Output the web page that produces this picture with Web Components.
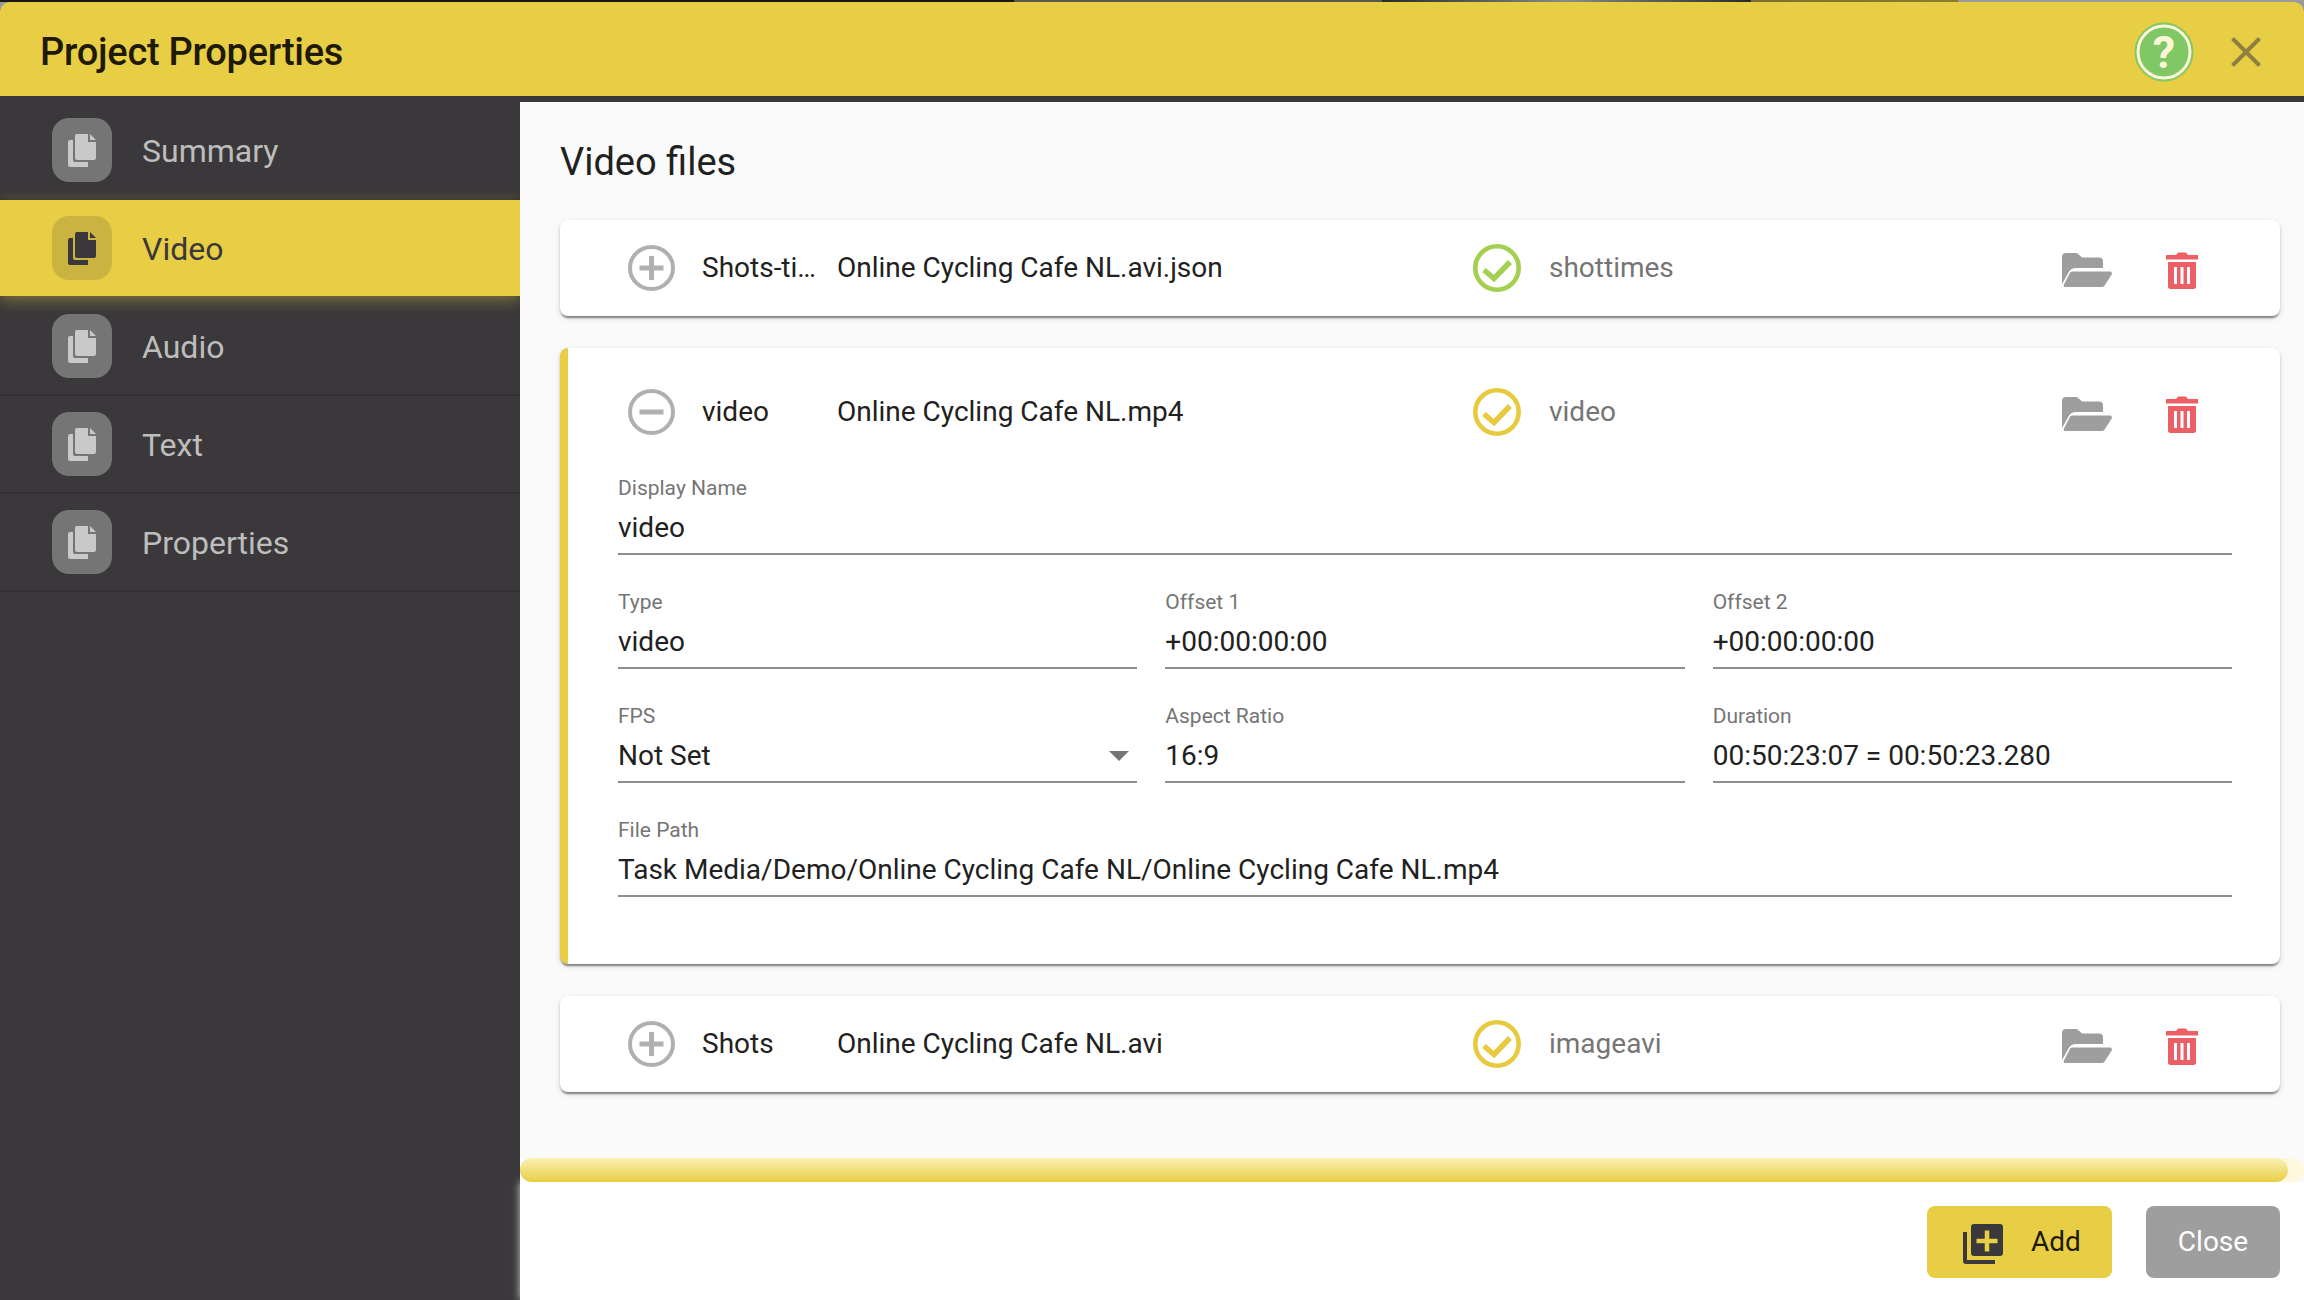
<!DOCTYPE html>
<html><head><meta charset="utf-8">
<style>
html,body{margin:0;padding:0;width:2304px;height:1300px;overflow:hidden;background:#9a9a9a;font-family:Roboto,"Liberation Sans",sans-serif}
</style></head><body>
<pp-app></pp-app>
<script>
const sel=(name,html)=>{customElements.define(name,class extends HTMLElement{connectedCallback(){if(this.shadowRoot)return;this.attachShadow({mode:'open'}).innerHTML=typeof html==='function'?html(this):html;}})};

const docIcon=`<svg width="28" height="33" viewBox="0 0 28 33" fill="currentColor"><path d="M0 8a2 2 0 0 1 2-2h3v20a2 2 0 0 0 2 2h13v5H2a2 2 0 0 1-2-2z"/><path d="M9 0h11v8h8v16a2 2 0 0 1-2 2H9a2 2 0 0 1-2-2V2a2 2 0 0 1 2-2z"/><path d="M22 0l6 6h-6z"/></svg>`;

sel('pp-nav-item',h=>`<style>
:host{display:flex;align-items:center;box-sizing:border-box;height:98px;padding-left:52px;border-bottom:2px solid #333133;color:#bdbdbd;font-size:32px;position:relative}
:host([active]){background:#e8ce45;color:#3a383a;border-bottom:0;height:96px;margin-bottom:2px;box-shadow:0 4px 14px rgba(232,206,69,.4);z-index:1}
.ic{width:60px;height:64px;border-radius:17px;background:#757575;color:#c9c9c9;display:flex;align-items:center;justify-content:center;margin-right:30px}
:host([active]) .ic{background:#cbb342;color:#3a383a}
.t{position:relative;top:1px}
</style><span class="ic">${docIcon}</span><span class="t"><slot></slot></span>`);

sel('pp-sidebar',`<style>:host{display:block;width:520px;flex:none;background:#3a383a;padding-top:6px;box-sizing:border-box;position:relative;z-index:0}</style><slot></slot>`);

sel('pp-header',`<style>
:host{display:flex;align-items:center;height:94px;flex:none;background:#e8ce45;border-radius:10px 10px 0 0;padding:0 43px 0 40px;color:#1f1a05;font-size:38px;font-weight:500;letter-spacing:-.25px;box-sizing:border-box}
.t{flex:1;position:relative;top:3px}
svg{display:block}
.help{margin-right:37px;position:relative;width:60px;height:60px;top:3px}
.q{position:absolute;inset:0;display:flex;align-items:center;justify-content:center;color:#fbf6d6;font:700 45px Roboto,sans-serif;letter-spacing:0}
</style>
<span class="t"><slot></slot></span>
<span class="help"><svg width="60" height="60" viewBox="0 0 60 60"><circle cx="30" cy="30" r="29.500" fill="#80c765"/><circle cx="30" cy="30" r="26" fill="none" stroke="#fbf6d6" stroke-width="3"/></svg><span class="q">?</span></span>
<svg width="30" height="30" viewBox="0 0 30 30" style="position:relative;top:3px"><path d="M1.500 1.500l27 27M28.500 1.500l-27 27" stroke="#8f8041" stroke-width="4" fill="none"/></svg>`);

const folder=`<svg width="50" height="34" viewBox="0 0 50 34" fill="#9e9e9e"><path d="M0 4a4 4 0 0 1 4-4h10a3 3 0 0 1 2 .8l4 3.700h17a4 4 0 0 1 4 4V15H14c-3.500 0-6 1.500-7.500 4.500L0 31z"/><path d="M10 18.500h38a2 2 0 0 1 1.800 2.800L43 32a4 4 0 0 1-3 2H3a1.500 1.500 0 0 1-1.200-2.200l6-11.500a3 3 0 0 1 2.200-1.800z"/></svg>`;
const trash=`<svg width="32" height="37" viewBox="0 0 32 37" fill="#ec5f67"><path d="M0 3h10l2-2.500h8l2 2.500h10v4.500H0z"/><path fill-rule="evenodd" d="M2 10h28v24.500a2.500 2.500 0 0 1-2.500 2.500h-23A2.500 2.500 0 0 1 2 34.500zM8 15v17h3V15zM14.500 15v17h3V15zM21 15v17h3V15z"/></svg>`;
const exp=(open)=>`<svg width="47" height="46" viewBox="0 0 47 46"><ellipse cx="23.500" cy="23" rx="21.500" ry="21" fill="none" stroke="#b0b0b0" stroke-width="4"/><path d="${open?'M11.500 23h24':'M11.500 23h24M23.500 11v24'}" stroke="#b0b0b0" stroke-width="5" fill="none"/></svg>`;
const check=(c)=>`<svg width="48" height="48" viewBox="0 0 48 48"><circle cx="24" cy="24" r="21.700" fill="none" stroke="${c}" stroke-width="4.600"/><path d="M11 26l10 8.500L37 18" fill="none" stroke="${c}" stroke-width="5.500"/></svg>`;

sel('pp-file-row',h=>{const a=k=>h.getAttribute(k)||'';return `<style>
:host{display:grid;grid-template-columns:60px 47px 27px 135px 636px 48px 28px 513px 50px 54px 32px;align-items:center;height:96px;font-size:28px;color:#212121;margin-left:var(--row-shift,8px)}
span{display:block;white-space:nowrap}
.st{color:#757575}
svg{display:block}
.ex{grid-column:2}.nm{grid-column:5}
.ty,.nm,.st{line-height:38px}
.fi{grid-column:9;position:relative;top:2px}.tr{grid-column:11;position:relative;top:2px}
.ty{grid-column:4}
.ck{grid-column:6}.st{grid-column:8}
</style>
<span class="ex">${exp(h.hasAttribute('open'))}</span>
<span class="ty">${a('type')}</span><span class="nm">${a('name')}</span>
<span class="ck">${check(a('ok')==='green'?'#a5cf50':'#e8ca3f')}</span><span class="st">${a('status')}</span>
<span class="fi">${folder}</span><span class="tr">${trash}</span>`});

sel('pp-card',`<style>
:host{display:block;background:#fff;border-radius:8px;box-shadow:0 4px 2px -2px rgba(0,0,0,.3),0 2px 2px 0 rgba(0,0,0,.2),0 2px 6px 0 rgba(0,0,0,.12);margin-bottom:32px;box-sizing:border-box;overflow:hidden}
:host([open]){border-left:8px solid #e8ce45;padding:16px 0 67px 0;--row-shift:0px}
:host([open]) .b{padding:13px 48px 0 50px}
</style><slot name="row"></slot><div class="b"><slot></slot></div>`);

sel('pp-field',h=>{const l=h.getAttribute('label'),s=h.hasAttribute('select');return `<style>
:host{display:block;height:82px;box-sizing:border-box;border-bottom:2px solid #8e8e8e;position:relative;font-size:28px;color:#212121}
.l{display:block;font-size:21px;line-height:30px;color:#757575}
.v{display:block;line-height:38px;margin-top:6px;white-space:nowrap}
.a{position:absolute;right:8px;top:50px;width:0;height:0;border:10px solid transparent;border-bottom:0;border-top-color:#757575}
</style><span class="l">${l}</span><span class="v"><slot></slot></span>${s?'<i class="a"></i>':''}`});

sel('pp-fields',`<style>:host{display:grid;grid-template-columns:repeat(3,1fr);gap:32px 28px}::slotted([wide]){grid-column:1/-1}</style><slot></slot>`);

sel('pp-button',h=>`<style>
:host{display:inline-flex;align-items:center;justify-content:center;height:72px;border-radius:8px;font-size:28px;background:${h.hasAttribute('primary')?'#e8ce45':'#9e9e9e'};color:${h.hasAttribute('primary')?'#1f1a05':'#fff'};box-sizing:border-box;width:${h.hasAttribute('primary')?'185px':'134px'};gap:28px}
:host([primary]){justify-content:flex-start;padding-left:36px}
svg{display:block;position:relative;top:2px}
span{position:relative;top:-1px}
</style>${h.hasAttribute('primary')?`<svg width="40" height="40" viewBox="0 0 40 40"><path d="M0 8h4v28h28v4H3a3 3 0 0 1-3-3z" fill="#3a383a"/><rect x="8" y="0" width="32" height="32" rx="3" fill="#3a383a"/><path d="M24 6.500v21M13.500 17h21" stroke="#e8ce45" stroke-width="4.500"/></svg>`:''}<span><slot></slot></span>`);

sel('pp-scrollbar',`<style>:host{display:block;height:24px;background:#fdf8de;border-radius:12px;flex:none;position:relative;z-index:1}
i{display:block;height:24px;width:1768px;border-radius:12px;background:linear-gradient(#fbf1b4,#e8ce45)}</style><i></i>`);

sel('pp-app',`<style>
:host{display:flex;flex-direction:column;width:2304px;height:1300px;box-sizing:border-box;padding-top:2px;background:linear-gradient(90deg,#1c1810 0,#1c1810 44%,#5a5848 44%,#5a5848 60%,#2a2a28 60%,#8a8a80 68%,#2a2a28 76%,#7a7030 76%,#8a7d2c 85%,#9a9a9a 85%) top/100% 2px no-repeat,#9a9a9a}
.body{display:flex;flex:1;min-height:0;background:#3a383a}
.main{flex:1;display:flex;flex-direction:column;border-top:6px solid #3a383a;background:#fafafa;min-width:0;position:relative;z-index:1}
.scroll{flex:1;padding:0 24px 0 40px;min-height:0}
h2{margin:0;font-weight:400;font-size:38px;color:#212121;line-height:60px;padding-top:30px;height:118px;box-sizing:border-box}
.foot{height:118px;flex:none;background:#fff;display:flex;justify-content:flex-end;align-items:flex-start;gap:34px;padding:24px 24px 0 0;box-sizing:border-box;position:relative;box-shadow:0 0 8px rgba(255,255,255,.75)}
</style>
<pp-header>Project Properties</pp-header>
<div class="body">
<pp-sidebar>
<pp-nav-item>Summary</pp-nav-item>
<pp-nav-item active>Video</pp-nav-item>
<pp-nav-item>Audio</pp-nav-item>
<pp-nav-item>Text</pp-nav-item>
<pp-nav-item>Properties</pp-nav-item>
</pp-sidebar>
<div class="main">
<div class="scroll">
<h2>Video files</h2>
<pp-card><pp-file-row slot="row" type="Shots-ti…" name="Online Cycling Cafe NL.avi.json" ok="green" status="shottimes"></pp-file-row></pp-card>
<pp-card open>
<pp-file-row slot="row" open type="video" name="Online Cycling Cafe NL.mp4" status="video"></pp-file-row>
<pp-field label="Display Name">video</pp-field>
<pp-fields style="margin-top:32px">
<pp-field label="Type">video</pp-field>
<pp-field label="Offset 1">+00:00:00:00</pp-field>
<pp-field label="Offset 2">+00:00:00:00</pp-field>
<pp-field label="FPS" select>Not Set</pp-field>
<pp-field label="Aspect Ratio">16:9</pp-field>
<pp-field label="Duration">00:50:23:07 = 00:50:23.280</pp-field>
<pp-field label="File Path" wide>Task Media/Demo/Online Cycling Cafe NL/Online Cycling Cafe NL.mp4</pp-field>
</pp-fields>
</pp-card>
<pp-card><pp-file-row slot="row" type="Shots" name="Online Cycling Cafe NL.avi" status="imageavi"></pp-file-row></pp-card>
</div>
<pp-scrollbar></pp-scrollbar>
<div class="foot"><pp-button primary>Add</pp-button><pp-button>Close</pp-button></div>
</div>
</div>`);
</script>
</body></html>
